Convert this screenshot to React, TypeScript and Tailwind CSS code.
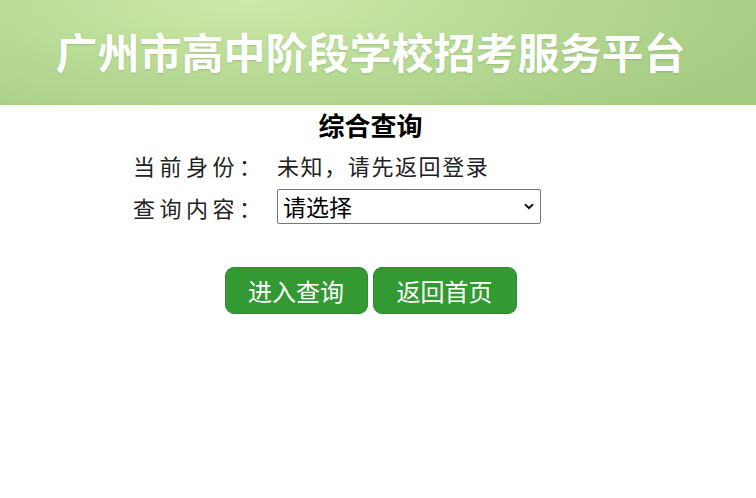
import React from "react";

const cjk = { fontFamily: '"Noto Sans CJK SC", "Noto Sans", sans-serif' };

export default function App() {
  return (
    <div className="w-[741px] bg-white" style={cjk}>
      <div className="h-[105px] w-[756px] bg-radial-[ellipse_75%_150%_at_33%_0%] from-[#cdeaa8] via-[#b6da94] to-[#a5ca81] flex items-center">
        <div className="w-[741px] pb-[3px] text-center text-white font-bold text-[42px] leading-none [text-shadow:0_1px_2px_rgba(80,120,50,0.25)]">
          广州市高中阶段学校招考服务平台
        </div>
      </div>
      <div className="h-[40px] flex items-center justify-center text-[26px] font-bold text-black leading-none">
        综合查询
      </div>
      <div className="ml-[133px] grid grid-cols-[144px_auto] text-[22px] leading-none text-[#222]">
        <div className="h-[40px] flex items-center tracking-[4.5px]">当前身份：</div>
        <div className="h-[40px] flex items-center tracking-[1.6px]">未知，请先返回登录</div>
        <div className="h-[43px] flex items-center tracking-[4.5px]">查询内容：</div>
        <div className="h-[43px] flex items-center">
          <div className="relative w-[264px] h-[35px] border border-[#767676] rounded-[2px] bg-white flex items-center">
            <span className="pl-[5px] text-[23px] text-black leading-none">请选择</span>
            <svg className="absolute right-[6px] top-[13px]" width="10" height="7" viewBox="0 0 10 7">
              <path d="M1 1.2 L5 5.2 L9 1.2" fill="none" stroke="#111" strokeWidth="2" />
            </svg>
          </div>
        </div>
      </div>
      <div className="mt-[39px] flex justify-center gap-[5px]">
        <button className="w-[143px] h-[47px] rounded-[9px] bg-[#339933] border border-[#2e8a2e] text-white text-[24px] leading-none">
          进入查询
        </button>
        <button className="w-[144px] h-[47px] rounded-[9px] bg-[#339933] border border-[#2e8a2e] text-white text-[24px] leading-none">
          返回首页
        </button>
      </div>
    </div>
  );
}
